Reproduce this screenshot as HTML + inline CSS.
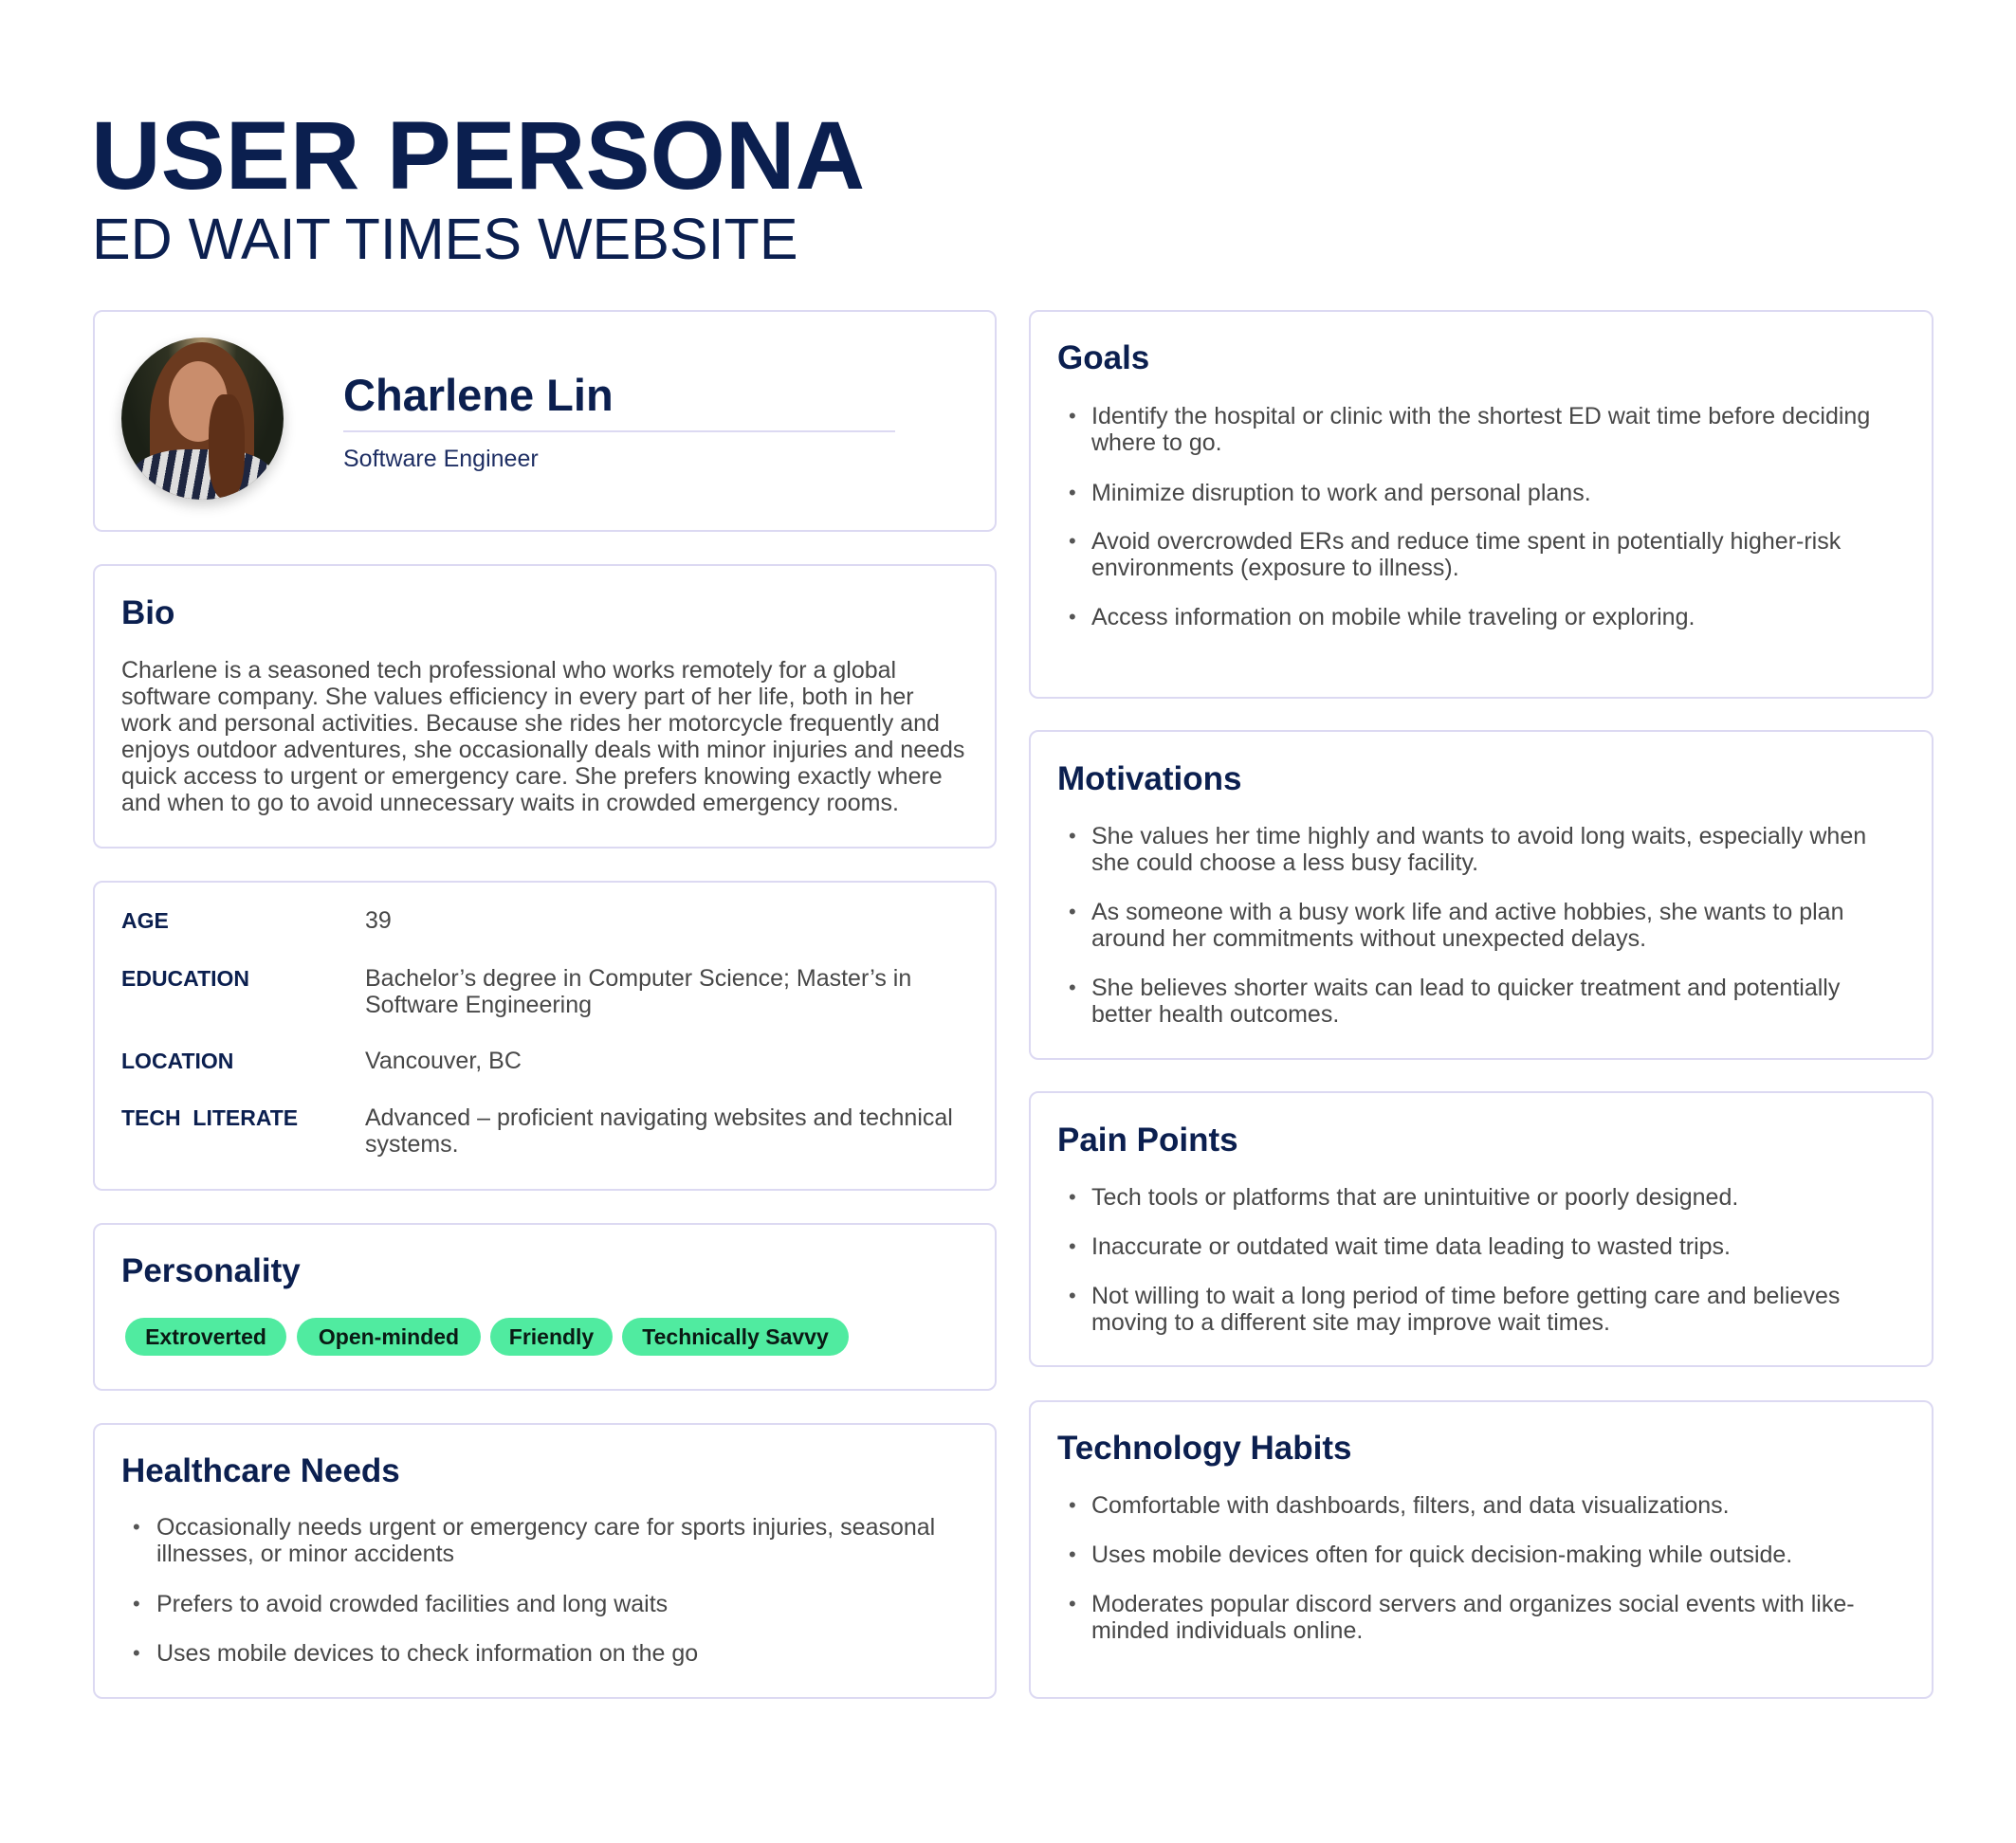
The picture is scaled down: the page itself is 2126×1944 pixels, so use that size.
<!DOCTYPE html>
<html><head><meta charset="utf-8"><style>
*{margin:0;padding:0;box-sizing:border-box}
body{width:2126px;height:1944px;background:#fff;position:relative;font-family:"Liberation Sans",sans-serif;overflow:hidden}
.c{position:absolute;border:2px solid #dcd9f2;border-radius:10px;background:#fff}
.h{position:absolute;font-size:35px;line-height:40px;font-weight:bold;color:#0b1f4f;white-space:nowrap}
.t{position:absolute;font-size:25px;line-height:28px;color:#474747;white-space:nowrap}
.b{position:absolute;font-size:22px;line-height:28px;color:#555;}
.l{position:absolute;font-size:23px;line-height:28px;font-weight:bold;color:#0b1f4f;white-space:nowrap}
.p{position:absolute;top:1390px;height:40px;border-radius:20px;background:#50eba0;color:#0a1a14;font-weight:bold;font-size:23px;line-height:40px;text-align:center;white-space:nowrap}
</style></head><body>
<div style="position:absolute;left:96px;top:104px;font-size:102px;line-height:120px;font-weight:bold;color:#0b1f4f;white-space:nowrap">USER PERSONA</div>
<div style="position:absolute;left:97px;top:216px;font-size:61px;line-height:72px;color:#0b1f4f;white-space:nowrap">ED WAIT TIMES WEBSITE</div>

<div class="c" style="left:98px;top:327px;width:953px;height:234px"></div>
<div class="c" style="left:98px;top:595px;width:953px;height:300px"></div>
<div class="c" style="left:98px;top:929px;width:953px;height:327px"></div>
<div class="c" style="left:98px;top:1290px;width:953px;height:177px"></div>
<div class="c" style="left:98px;top:1501px;width:953px;height:291px"></div>
<div class="c" style="left:1085px;top:327px;width:954px;height:410px"></div>
<div class="c" style="left:1085px;top:770px;width:954px;height:348px"></div>
<div class="c" style="left:1085px;top:1151px;width:954px;height:291px"></div>
<div class="c" style="left:1085px;top:1477px;width:954px;height:315px"></div>

<!-- avatar -->
<div style="position:absolute;left:128px;top:356px;width:171px;height:171px;border-radius:50%;overflow:hidden;box-shadow:0 6px 14px rgba(0,0,0,.2);background:radial-gradient(ellipse at 50% 5%,#b39a72 0%,#2f3222 30%,#1b2016 70%)">
  <div style="position:absolute;left:30px;top:5px;width:110px;height:165px;border-radius:50% 50% 30% 30%;background:#6b3a1f"></div>
  <div style="position:absolute;left:50px;top:25px;width:62px;height:85px;border-radius:50%;background:#c98d6c"></div>
  <div style="position:absolute;left:10px;top:118px;width:150px;height:70px;background:repeating-linear-gradient(100deg,#ddd 0 8px,#1e2640 8px 16px);border-radius:40% 40% 0 0"></div>
  <div style="position:absolute;left:92px;top:60px;width:38px;height:110px;background:#5e3018;border-radius:40%"></div>
</div>
<div style="position:absolute;left:362px;top:388px;font-size:47px;line-height:58px;font-weight:bold;color:#0b1f4f;white-space:nowrap">Charlene Lin</div>
<div style="position:absolute;left:362px;top:454px;width:582px;height:2px;background:#dcd9f2"></div>
<div style="position:absolute;left:362px;top:469px;font-size:25px;line-height:30px;color:#1e2e63;white-space:nowrap">Software Engineer</div>

<!-- Bio -->
<div class="h" style="left:128px;top:627px">Bio</div>
<div class="t" style="left:128px;top:693px">Charlene is a seasoned tech professional who works remotely for a global<br>software company. She values efficiency in every part of her life, both in her<br>work and personal activities. Because she rides her motorcycle frequently and<br>enjoys outdoor adventures, she occasionally deals with minor injuries and needs<br>quick access to urgent or emergency care. She prefers knowing exactly where<br>and when to go to avoid unnecessary waits in crowded emergency rooms.</div>

<!-- Info -->
<div class="l" style="left:128px;top:957px">AGE</div>
<div class="t" style="left:385px;top:957px">39</div>
<div class="l" style="left:128px;top:1018px">EDUCATION</div>
<div class="t" style="left:385px;top:1018px">Bachelor’s degree in Computer Science; Master’s in<br>Software Engineering</div>
<div class="l" style="left:128px;top:1105px">LOCATION</div>
<div class="t" style="left:385px;top:1105px">Vancouver, BC</div>
<div class="l" style="left:128px;top:1165px">TECH&nbsp; LITERATE</div>
<div class="t" style="left:385px;top:1165px">Advanced – proficient navigating websites and technical<br>systems.</div>

<!-- Personality -->
<div class="h" style="left:128px;top:1321px">Personality</div>
<div class="p" style="left:132px;width:170px">Extroverted</div>
<div class="p" style="left:313px;width:194px">Open-minded</div>
<div class="p" style="left:517px;width:129px">Friendly</div>
<div class="p" style="left:656px;width:239px">Technically Savvy</div>

<!-- Healthcare -->
<div class="h" style="left:128px;top:1532px">Healthcare Needs</div>
<div class="b" style="left:140px;top:1597px">•</div><div class="t" style="left:165px;top:1597px">Occasionally needs urgent or emergency care for sports injuries, seasonal<br>illnesses, or minor accidents</div>
<div class="b" style="left:140px;top:1678px">•</div><div class="t" style="left:165px;top:1678px">Prefers to avoid crowded facilities and long waits</div>
<div class="b" style="left:140px;top:1730px">•</div><div class="t" style="left:165px;top:1730px">Uses mobile devices to check information on the go</div>

<!-- Goals -->
<div class="h" style="left:1115px;top:358px">Goals</div>
<div class="b" style="left:1127px;top:425px">•</div><div class="t" style="left:1151px;top:425px">Identify the hospital or clinic with the shortest ED wait time before deciding<br>where to go.</div>
<div class="b" style="left:1127px;top:506px">•</div><div class="t" style="left:1151px;top:506px">Minimize disruption to work and personal plans.</div>
<div class="b" style="left:1127px;top:557px">•</div><div class="t" style="left:1151px;top:557px">Avoid overcrowded ERs and reduce time spent in potentially higher-risk<br>environments (exposure to illness).</div>
<div class="b" style="left:1127px;top:637px">•</div><div class="t" style="left:1151px;top:637px">Access information on mobile while traveling or exploring.</div>

<!-- Motivations -->
<div class="h" style="left:1115px;top:802px">Motivations</div>
<div class="b" style="left:1127px;top:868px">•</div><div class="t" style="left:1151px;top:868px">She values her time highly and wants to avoid long waits, especially when<br>she could choose a less busy facility.</div>
<div class="b" style="left:1127px;top:948px">•</div><div class="t" style="left:1151px;top:948px">As someone with a busy work life and active hobbies, she wants to plan<br>around her commitments without unexpected delays.</div>
<div class="b" style="left:1127px;top:1028px">•</div><div class="t" style="left:1151px;top:1028px">She believes shorter waits can lead to quicker treatment and potentially<br>better health outcomes.</div>

<!-- Pain -->
<div class="h" style="left:1115px;top:1183px">Pain Points</div>
<div class="b" style="left:1127px;top:1249px">•</div><div class="t" style="left:1151px;top:1249px">Tech tools or platforms that are unintuitive or poorly designed.</div>
<div class="b" style="left:1127px;top:1301px">•</div><div class="t" style="left:1151px;top:1301px">Inaccurate or outdated wait time data leading to wasted trips.</div>
<div class="b" style="left:1127px;top:1353px">•</div><div class="t" style="left:1151px;top:1353px">Not willing to wait a long period of time before getting care and believes<br>moving to a different site may improve wait times.</div>

<!-- Tech -->
<div class="h" style="left:1115px;top:1508px">Technology Habits</div>
<div class="b" style="left:1127px;top:1574px">•</div><div class="t" style="left:1151px;top:1574px">Comfortable with dashboards, filters, and data visualizations.</div>
<div class="b" style="left:1127px;top:1626px">•</div><div class="t" style="left:1151px;top:1626px">Uses mobile devices often for quick decision-making while outside.</div>
<div class="b" style="left:1127px;top:1678px">•</div><div class="t" style="left:1151px;top:1678px">Moderates popular discord servers and organizes social events with like-<br>minded individuals online.</div>
</body></html>
